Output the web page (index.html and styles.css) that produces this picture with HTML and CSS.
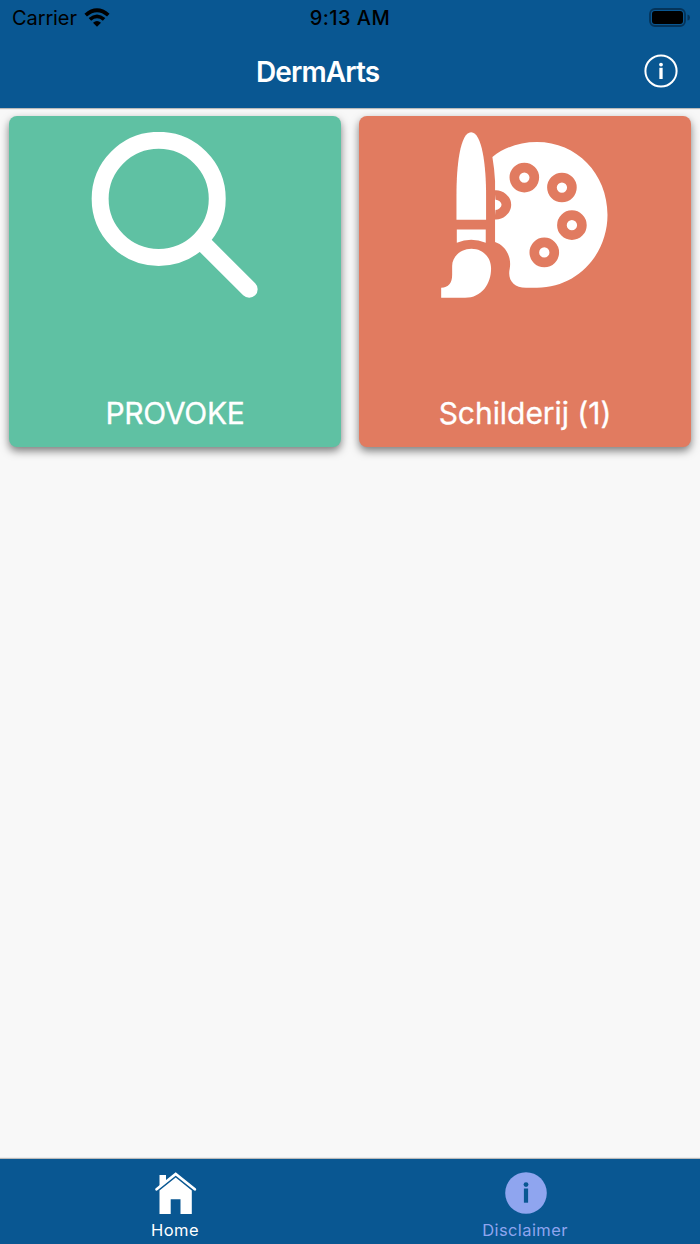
FILE: index.html
```html
<!DOCTYPE html>
<html lang="nl">
<head>
    <meta charset="UTF-8">
    <meta name="viewport" content="width=device-width, initial-scale=1.0">
    <title>DermArts</title>
    <link rel="stylesheet" href="styles.css">
</head>
<body>
    <header class="header">
        <div class="status-bar">
            <div class="carrier">
                <span class="carrier-name">Carrier</span>
                <svg class="wifi" viewBox="0 0 26 20">
                    <path d="M1.7 7.1Q13-2.8 24.3 7.1M5.9 11.4Q13 5.4 20.1 11.4" fill="none" stroke="#000" stroke-width="3.8"/>
                    <path d="M9 14.8Q13 11.2 17 14.8L13 18.8Z"/>
                </svg>
            </div>
            <span class="time">9:13 AM</span>
            <svg class="battery" viewBox="0 0 42 20">
                <rect x="1" y="1" width="35" height="17" rx="5" fill="none" stroke="#05345a" stroke-width="1.8"/>
                <rect x="3" y="3" width="31" height="13" rx="3"/>
                <path d="M38.5 6.5Q41 7 41 9.5T38.5 12.5Z" fill="#05345a"/>
            </svg>
        </div>
        <div class="nav-bar">
            <h1 class="title">DermArts</h1>
            <svg class="info-button" viewBox="0 0 34 34">
                <circle cx="17" cy="17" r="15.6" fill="none" stroke="#fff" stroke-width="2"/>
                <circle cx="17" cy="10.6" r="1.9" fill="#fff"/>
                <path d="M17 13.8V25" stroke="#fff" stroke-width="3.3"/>
            </svg>
        </div>
    </header>

    <main class="tiles">
        <a class="tile green">
            <svg class="tile-icon" viewBox="33 35 501 499">
                <g fill="none" stroke="#fff">
                    <circle cx="236" cy="236" r="176" stroke-width="51"/>
                    <path d="M365 365L508 508" stroke-width="51" stroke-linecap="round"/>
                </g>
            </svg>
            <span class="tile-label">PROVOKE</span>
        </a>
        <a class="tile orange">
            <svg class="tile-icon" viewBox="33 35 501 499">
                <g fill="#fff">
                    <path d="M79 299V224C79 137 90 36 123 36S168 137 168 224V299Z"/>
                    <path d="M80 328H167V368Q123 350 80 368Z"/>
                    <path d="M33 533V503C55 503 66 489 66 464V438C66 409 92 386 124 386C158 386 183 411 183 445C183 491 155 533 105 533Z"/>
                    <path d="M187 110C225 80 270 65 321 65C440 65 533 160 533 284C533 403 442 503 321 503H288C250 503 232 479 239 446C246 407 224 376 195 366V182Q193 145 187 110Z"/>
                </g>
                <g fill="#fff" stroke="#e17b60" stroke-width="29">
                    <circle cx="283" cy="172" r="30"/>
                    <circle cx="396" cy="202" r="30"/>
                    <circle cx="426" cy="315" r="30"/>
                    <circle cx="343" cy="397" r="30"/>
                    <path d="M195 224.500C211 223 229 237 229 254S211 285 195 283.500"/>
                </g>
            </svg>
            <span class="tile-label wide">Schilderij (1)</span>
        </a>
    </main>

    <nav class="tab-bar">
        <a class="tab active">
            <svg class="tab-icon" viewBox="0 0 42 42">
                <path d="M1.600 17.300L20.700 2L39.800 17.300" fill="none" stroke="#fff" stroke-width="2.700" stroke-linecap="round"/>
                <path d="M4.500 14.500V3H11V9.500ZM4.500 18.500L20.700 5.500L36.800 18.500V42H25.500V27.300H15.700V42H4.500Z" fill="#fff"/>
            </svg>
            <span class="tab-label">Home</span>
        </a>
        <a class="tab">
            <svg class="tab-icon" viewBox="0 0 42 42">
                <circle cx="21" cy="21" r="20.800" fill="#8fa5ef"/>
                <circle cx="21" cy="12.600" r="2.400" fill="#095792"/>
                <path d="M21 16.500V30.700" stroke="#095792" stroke-width="4.200"/>
            </svg>
            <span class="tab-label">Disclaimer</span>
        </a>
    </nav>
</body>
</html>
```

FILE: styles.css
```css
* {
    box-sizing: border-box;
}
body {
    margin: 0;
    height: 1244px;
    display: flex;
    flex-direction: column;
    font-family: Inter, sans-serif;
    background-color: #f8f8f8;
}
svg {
    display: block;
}
.header {
    height: 108px;
    background-color: #095792;
    box-shadow: 0 1px 1px rgba(0, 0, 0, 0.25);
}
.status-bar {
    height: 36px;
    padding: 0 9px 0 12px;
    display: grid;
    grid-template-columns: 1fr auto 1fr;
    align-items: center;
    font-size: 20px;
    color: #000;
}
.carrier {
    display: flex;
    align-items: center;
    gap: 7px;
}
.carrier-name {
    letter-spacing: -0.1px;
}
.wifi {
    width: 26px;
    height: 20px;
}
.time {
    font-weight: 500;
    letter-spacing: 0.45px;
    margin-right: 3px;
}
.battery {
    width: 42px;
    height: 20px;
    justify-self: end;
}
.nav-bar {
    height: 70px;
    padding: 0 22px 0 256px;
    display: flex;
    align-items: center;
    justify-content: space-between;
}
.title {
    margin: 1px 0 0;
    font-size: 28px;
    font-weight: 600;
    letter-spacing: -0.9px;
    color: white;
}
.info-button {
    width: 34px;
    height: 34px;
}
.tiles {
    flex: 1;
    display: grid;
    grid-template-columns: 332px 332px;
    align-content: start;
    gap: 18px;
    padding: 8px 9px;
}
.tile {
    height: 331px;
    padding: 16px 0;
    display: flex;
    flex-direction: column;
    align-items: center;
    justify-content: space-between;
    border-radius: 8px;
    box-shadow: 0 4px 8px rgba(0, 0, 0, 0.5);
}
.green {
    background-color: #5fc1a3;
}
.orange {
    background-color: #e17b60;
}
.tile-icon {
    width: 167px;
    height: 166px;
    margin-right: 2px;
}
.tile-label {
    font-size: 30px;
    line-height: 36px;
    letter-spacing: -0.3px;
    color: white;
    -webkit-text-stroke: 0.3px white;
}
.tile-label.wide {
    letter-spacing: -0.05px;
}
.tab-bar {
    height: 85px;
    display: flex;
    background-color: #095792;
    box-shadow: 0 -1px 1px rgba(0, 0, 0, 0.25);
}
.tab {
    flex: 1;
    padding-top: 13px;
    display: flex;
    flex-direction: column;
    align-items: center;
    color: #8fa5ef;
}
.tab.active {
    color: white;
}
.tab-icon {
    width: 42px;
    height: 42px;
    margin-left: 2px;
}
.tab-label {
    margin-top: 6px;
    font-size: 16.5px;
    line-height: 20px;
    letter-spacing: 0.4px;
}
```
